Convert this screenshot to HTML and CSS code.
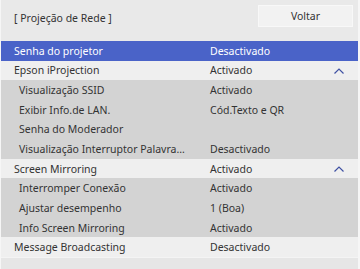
FILE: index.html
```html
<!DOCTYPE html>
<html>
<head>
<meta charset="utf-8">
<link rel="stylesheet" href="styles.css">
</head>
<body>
<div class="screen">
  <div class="header">
    <div class="title">[ Projeção de Rede ]</div>
    <div class="btn">Voltar</div>
  </div>
  <div class="list">
    <div class="row sel"><span class="lbl">Senha do projetor</span><span class="val">Desactivado</span></div>
    <div class="row top"><span class="lbl">Epson iProjection</span><span class="val">Activado</span><svg class="chev" viewBox="0 0 12 8" width="12" height="8"><path d="M1.5 6.5 L6 2 L10.5 6.5" fill="none" stroke="#3f51a3" stroke-width="1.2"/></svg></div>
    <div class="row sub"><span class="lbl">Visualização SSID</span><span class="val">Activado</span></div>
    <div class="row sub"><span class="lbl">Exibir Info.de LAN.</span><span class="val">Cód.Texto e QR</span></div>
    <div class="row sub"><span class="lbl">Senha do Moderador</span><span class="val"></span></div>
    <div class="row sub"><span class="lbl">Visualização Interruptor Palavra...</span><span class="val">Desactivado</span></div>
    <div class="row top"><span class="lbl">Screen Mirroring</span><span class="val">Activado</span><svg class="chev" viewBox="0 0 12 8" width="12" height="8"><path d="M1.5 6.5 L6 2 L10.5 6.5" fill="none" stroke="#3f51a3" stroke-width="1.2"/></svg></div>
    <div class="row sub"><span class="lbl">Interromper Conexão</span><span class="val">Activado</span></div>
    <div class="row sub"><span class="lbl">Ajustar desempenho</span><span class="val">1 (Boa)</span></div>
    <div class="row sub"><span class="lbl">Info Screen Mirroring</span><span class="val">Activado</span></div>
    <div class="row top"><span class="lbl">Message Broadcasting</span><span class="val">Desactivado</span></div>
    <div class="row empty"></div>
  </div>
</div>
</body>
</html>
```

FILE: styles.css
```css
* { box-sizing: border-box; }
html, body { margin: 0; padding: 0; }
body {
  width: 360px;
  height: 269px;
  overflow: hidden;
  background: #ffffff;
  font-family: "Noto Sans", "Open Sans", sans-serif;
  font-size: 10.5px;
  color: #333333;
}
.screen {
  width: 360px;
  height: 269px;
  background: #e8e8e8;
  border-left: 1px solid #f6f6f6;
  border-right: 2px solid #f6f6f6;
  display: flex;
  flex-direction: column;
}
.header {
  height: 41px;
  display: flex;
  align-items: flex-start;
  justify-content: space-between;
  padding: 5px 5px 0 13px;
  background: #e9e9e9;
}
.title {
  margin-top: 6px;
}
.btn {
  width: 95px;
  height: 22px;
  background: #f2f2f2;
  border: 1px solid #f8f8f8;
  display: flex;
  align-items: center;
  justify-content: center;
}
.list {
  display: flex;
  flex-direction: column;
}
.row {
  height: 19.65px;
  display: flex;
  align-items: center;
  position: relative;
  white-space: nowrap;
}
.row .lbl { width: 209px; padding-left: 13px; overflow: hidden; }
.row.sub .lbl { padding-left: 18px; }
.row .val { flex: 1; }
.sel { background: #4a63c8; color: #ffffff; }
.top { background: #efefef; }
.sub { background: #d3d3d3; }
.empty { background: #e6e6e6; border-top: 1px solid #f4f4f4; height: 12px; }
.chev { position: absolute; right: 13px; top: 6px; }
```
